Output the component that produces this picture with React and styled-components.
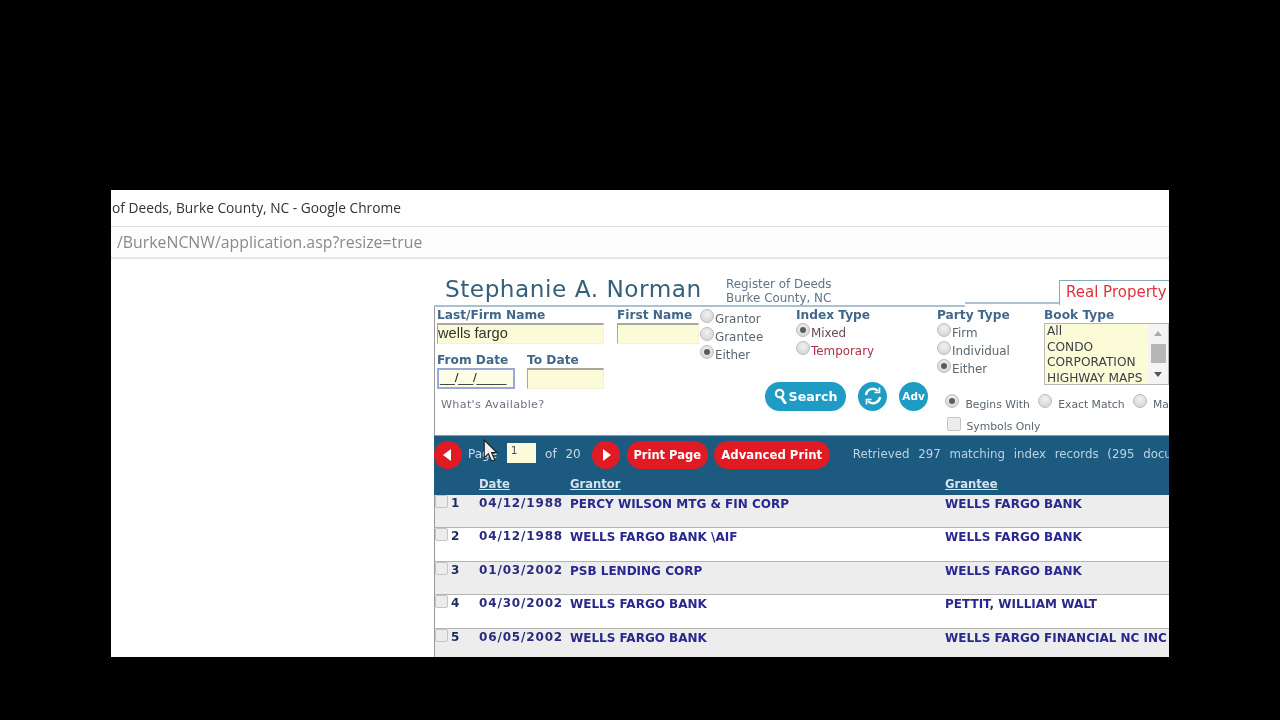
import React from 'react';
import styled, { createGlobalStyle } from 'styled-components';

const GlobalStyle = createGlobalStyle`
  html, body {
    margin: 0;
    background: #000;
  }
  * {
    box-sizing: border-box;
  }
`;

const Page = styled.div`
  width: 1280px;
  height: 720px;
  padding: 190px 111px 63px;
  background: #000;
  overflow: hidden;
`;

const Win = styled.div`
  position: relative;
  width: 1058px;
  height: 467px;
  background: #fff;
  overflow: hidden;
  filter: blur(0.55px);
  font-family: 'DejaVu Sans', sans-serif;
`;

const TitleBar = styled.div`
  height: 37px;
  padding: 0 1px 2px;
  display: flex;
  align-items: center;
  font-family: 'Open Sans', sans-serif;
  font-size: 13.75px;
  font-weight: 500;
  color: #333;
  background: #fff;
  border-bottom: 1px solid #dcdcdc;
`;

const AddressBar = styled.div`
  height: 32px;
  padding: 0 6px;
  display: flex;
  align-items: center;
  font-family: 'Open Sans', sans-serif;
  font-size: 15.85px;
  color: #8a8a8a;
  background: #fdfdfd;
  border-bottom: 2px solid #e6e6e6;
`;

const Body = styled.div`
  display: flex;
  padding-left: 323px;
`;

const Main = styled.div`
  width: 735px;
  flex: none;
`;

const Head = styled.div`
  height: 46px;
  display: flex;
  align-items: flex-end;
  padding-left: 11px;
`;

const Name = styled.div`
  width: 281px;
  flex: none;
  font-size: 23.2px;
  line-height: 30px;
  letter-spacing: 0.52px;
  color: #35607c;
  padding-bottom: 1px;
`;

const Office = styled.div`
  font-size: 11.9px;
  line-height: 14px;
  color: #5d7486;
  white-space: nowrap;
`;

const Tab = styled.div`
  margin-left: auto;
  width: 110px;
  height: 25px;
  padding: 2px 0 0 6px;
  font-size: 15px;
  color: #e0323c;
  white-space: nowrap;
  border: 1px solid #86a8bd;
  border-width: 1px 0 0 1px;
  background: #fff;
`;

const Rule = styled.div`
  display: flex;
  height: 2px;
`;

const RuleSeg = styled.div`
  width: ${(p) => p.$w}px;
  height: 2px;
  background: #a9c1d2;
  ${(p) => p.$raised && 'transform: translateY(-3px);'}
`;

const Form = styled.div`
  height: 128px;
  display: flex;
  border-left: 1px solid #9a9a9a;
`;

const NameCol = styled.div`
  width: 265px;
  flex: none;
  padding: 1px 0 0 2px;
  display: flex;
  flex-direction: column;
`;

const FieldRow = styled.div`
  display: flex;
  gap: ${(p) => p.$gap}px;
  margin-bottom: 9px;
`;

const Field = styled.div`
  width: ${(p) => p.$w}px;
  flex: none;
`;

const Label = styled.div`
  font-size: 12.2px;
  line-height: 14px;
  font-weight: 700;
  color: #42678a;
  white-space: nowrap;
  margin-bottom: ${(p) => p.$mb || 0}px;
`;

const Input = styled.div`
  width: 100%;
  height: 21px;
  margin-top: 1px;
  background: #fbfbd8;
  border: 1px solid #f0f0dc;
  border-top: 2px solid #a8a8a0;
  border-left: 1px solid #a8a8a0;
  font-family: 'Liberation Sans', sans-serif;
  font-size: 14.6px;
  line-height: 17px;
  color: #333;
  white-space: nowrap;
  ${(p) => p.$focus && 'border: 2px solid #98a8d8; background: #fdfde6; color: #222; font-size: 13.6px; line-height: 15px; letter-spacing: -0.2px; padding-left: 1px;'}
`;

const Available = styled.div`
  font-size: 11.2px;
  line-height: 14px;
  margin: 0 0 0 4px;
  color: #6b7480;
  letter-spacing: 0.3px;
`;

const RightCol = styled.div`
  flex: 1;
  min-width: 0;
`;

const TopRow = styled.div`
  height: 74px;
  display: flex;
`;

const Group = styled.div`
  width: ${(p) => p.$w}px;
  flex: none;
  padding-top: ${(p) => p.$top}px;
`;

const Radio = styled.span`
  display: inline-block;
  flex: none;
  position: relative;
  width: 14px;
  height: 14px;
  border-radius: 50%;
  background: radial-gradient(circle at 50% 35%, #f2f2f2, #cfcfcf);
  border: 1px solid #bcbcbc;
  ${(p) => p.$on && `
    &::after {
      content: '';
      position: absolute;
      left: 3px;
      top: 3px;
      width: 6px;
      height: 6px;
      border-radius: 50%;
      background: #5c5c5c;
    }
  `}
`;

const Opt = styled.div`
  height: 18px;
  display: flex;
  align-items: flex-start;
  gap: ${(p) => p.$gap || 1}px;
  margin-left: ${(p) => p.$ml || 0}px;
  font-size: ${(p) => p.$size || 11.9}px;
  line-height: 14px;
  color: ${(p) => p.$color || '#5a6670'};
  white-space: nowrap;
`;

const OptText = styled.span`
  margin-top: ${(p) => p.$top || 3}px;
`;

const BookList = styled.div`
  width: 125px;
  height: 62px;
  display: flex;
  background: #fbfbd8;
  border: 1px solid #b8b8b0;
  overflow: hidden;
`;

const BookItems = styled.div`
  flex: 1;
  padding: 0 0 0 2px;
  font-size: 12.2px;
  line-height: 15.6px;
  color: #3a3f4a;
  white-space: nowrap;
  min-width: 0;
`;

const Scroll = styled.div`
  width: 20px;
  flex: none;
  background: #f4f4f4;
  display: flex;
  flex-direction: column;
  align-items: center;
  padding-top: 7px;
`;

const Thumb = styled.div`
  width: 15px;
  height: 19px;
  margin: 8px 0 9px;
  background: #b6b6b6;
`;

const Arrow = styled.div`
  width: 0;
  height: 0;
  border-left: 4px solid transparent;
  border-right: 4px solid transparent;
  border-bottom: ${(p) => (p.$down ? '0' : '5px solid #aaa')};
  border-top: ${(p) => (p.$down ? '5px solid #555' : '0')};
`;

const ActionRow = styled.div`
  display: flex;
  padding-left: 65px;
`;

const Actions = styled.div`
  display: flex;
  align-items: center;
  gap: 12px;
  height: 30px;
  width: 180px;
  flex: none;
`;

const SearchBtn = styled.div`
  width: 81px;
  height: 29px;
  border-radius: 15px;
  background: #1f9cc4;
  color: #fff;
  display: flex;
  align-items: center;
  justify-content: center;
  gap: 1px;
  font-size: 12.6px;
  font-weight: 700;
`;

const RoundBtn = styled.div`
  width: 29px;
  height: 29px;
  border-radius: 50%;
  flex: none;
  background: #1f9cc4;
  color: #fff;
  display: flex;
  align-items: center;
  justify-content: center;
  font-size: 10.5px;
  font-weight: 700;
`;

const Matches = styled.div`
  flex: 1;
  padding-top: 13px;
  min-width: 0;
`;

const MatchRow = styled.div`
  display: flex;
  gap: 8px;
  height: 23px;
  white-space: nowrap;
`;

const Check = styled.span`
  display: inline-block;
  flex: none;
  width: ${(p) => p.$size}px;
  height: ${(p) => p.$size}px;
  background: #ececec;
  border: 1px solid #c4c4c4;
  border-radius: 2px;
`;

const Bar = styled.div`
  height: 60px;
  background: #1c5a80;
  border-top: 1px solid #7e9db3;
  color: #c9dbe8;
`;

const Pager = styled.div`
  height: 38px;
  display: flex;
  align-items: center;
  white-space: nowrap;
  font-size: 12px;
`;

const RedCircle = styled.div`
  width: 28px;
  height: 28px;
  flex: none;
  margin-left: ${(p) => p.$ml || 0}px;
  border-radius: 50%;
  background: #e01b24;
  display: flex;
  align-items: center;
  justify-content: center;
`;

const Tri = styled.div`
  width: 0;
  height: 0;
  border-top: 6px solid transparent;
  border-bottom: 6px solid transparent;
  ${(p) => (p.$left ? 'border-right: 8px solid #fff; margin-right: 2px;' : 'border-left: 8px solid #fff; margin-left: 2px;')}
`;

const PagerText = styled.span`
  margin-left: ${(p) => p.$ml}px;
  margin-top: -3px;
  word-spacing: 5px;
`;

const PageInput = styled.div`
  width: 29px;
  height: 20px;
  flex: none;
  margin: -4px 0 0 10px;
  padding-left: 4px;
  background: #fbfbdc;
  font-size: 10px;
  line-height: 16px;
  color: #445;
`;

const RedBtn = styled.div`
  height: 28px;
  flex: none;
  width: ${(p) => p.$w}px;
  margin-left: ${(p) => p.$ml}px;
  border-radius: 14px;
  background: #e01b24;
  color: #fff;
  display: flex;
  align-items: center;
  justify-content: center;
  font-size: ${(p) => p.$size}px;
  font-weight: 700;
`;

const Retrieved = styled.span`
  margin-left: 23px;
  margin-top: -2px;
  font-size: 11.8px;
  color: #bcd2e2;
  word-spacing: 5px;
`;

const ColHead = styled.div`
  display: grid;
  grid-template-columns: 45px 91px 375px 1fr;
  height: 21px;
  padding-top: 3px;
  font-size: 11.6px;
  font-weight: 700;
  color: #d5e3ee;
`;

const ColText = styled.span`
  text-decoration: underline;
`;

const TableRow = styled.div`
  display: grid;
  grid-template-columns: 13px 31px 91px 375px 1fr;
  height: 33.4px;
  align-items: flex-start;
  white-space: nowrap;
  background: ${(p) => (p.$alt ? '#ededed' : '#fff')};
  border-bottom: 1px solid #b4b4b4;
  border-left: 1px solid #9a9a9a;
  font-size: 12px;
  line-height: 14px;
  font-weight: 700;
  color: #28288e;
`;

const RowCell = styled.span`
  padding-top: 2px;
  ${(p) => p.$num && 'color: #1c2a5c; padding-left: 3px; padding-top: 1px;'}
  ${(p) => p.$date && 'letter-spacing: 0.85px; padding-top: 1px; color: #2a2a80;'}
`;

const Cursor = styled.svg`
  position: absolute;
  left: 372px;
  top: 249px;
`;

const rows = [
  ['1', '04/12/1988', 'PERCY WILSON MTG & FIN CORP', 'WELLS FARGO BANK'],
  ['2', '04/12/1988', 'WELLS FARGO BANK \\AIF', 'WELLS FARGO BANK'],
  ['3', '01/03/2002', 'PSB LENDING CORP', 'WELLS FARGO BANK'],
  ['4', '04/30/2002', 'WELLS FARGO BANK', 'PETTIT, WILLIAM WALT'],
  ['5', '06/05/2002', 'WELLS FARGO BANK', 'WELLS FARGO FINANCIAL NC INC'],
];

const App = () => (
  <Page>
    <GlobalStyle />
    <Win>
      <TitleBar>of Deeds, Burke County, NC - Google Chrome</TitleBar>
      <AddressBar>/BurkeNCNW/application.asp?resize=true</AddressBar>
      <Body>
        <Main>
          <Head>
            <Name>Stephanie A. Norman</Name>
            <Office>
              Register of Deeds
              <br />
              Burke County, NC
            </Office>
            <Tab>Real Property</Tab>
          </Head>
          <Rule>
            <RuleSeg $w={531} />
            <RuleSeg $w={94} $raised />
          </Rule>
          <Form>
            <NameCol>
              <FieldRow $gap={13}>
                <Field $w={167}>
                  <Label>Last/Firm Name</Label>
                  <Input>wells fargo</Input>
                </Field>
                <Field $w={82}>
                  <Label>First Name</Label>
                  <Input />
                </Field>
              </FieldRow>
              <FieldRow $gap={12}>
                <Field $w={78}>
                  <Label>From Date</Label>
                  <Input $focus>__/__/____</Input>
                </Field>
                <Field $w={77}>
                  <Label>To Date</Label>
                  <Input />
                </Field>
              </FieldRow>
              <Available>What's Available?</Available>
            </NameCol>
            <RightCol>
              <TopRow>
                <Group $w={96} $top={2}>
                  <Opt><Radio /><OptText>Grantor</OptText></Opt>
                  <Opt><Radio /><OptText>Grantee</OptText></Opt>
                  <Opt><Radio $on /><OptText>Either</OptText></Opt>
                </Group>
                <Group $w={141} $top={1}>
                  <Label $mb={1}>Index Type</Label>
                  <Opt $color="#6a4a58"><Radio $on /><OptText>Mixed</OptText></Opt>
                  <Opt $color="#b03048"><Radio /><OptText>Temporary</OptText></Opt>
                </Group>
                <Group $w={107} $top={1}>
                  <Label $mb={1}>Party Type</Label>
                  <Opt><Radio /><OptText>Firm</OptText></Opt>
                  <Opt><Radio /><OptText>Individual</OptText></Opt>
                  <Opt><Radio $on /><OptText>Either</OptText></Opt>
                </Group>
                <Group $w={125} $top={1}>
                  <Label $mb={1}>Book Type</Label>
                  <BookList>
                    <BookItems>
                      All<br />CONDO<br />CORPORATION<br />HIGHWAY MAPS
                    </BookItems>
                    <Scroll>
                      <Arrow />
                      <Thumb />
                      <Arrow $down />
                    </Scroll>
                  </BookList>
                </Group>
              </TopRow>
              <ActionRow>
                <Actions>
                  <SearchBtn>
                    <svg width="14" height="16" viewBox="0 0 15 17">
                      <circle cx="6" cy="6" r="4" fill="none" stroke="#fff" strokeWidth="2.4" />
                      <path d="M8 10l4 6" stroke="#fff" strokeWidth="3" strokeLinecap="round" />
                    </svg>
                    Search
                  </SearchBtn>
                  <RoundBtn>
                    <svg width="20" height="20" viewBox="0 0 20 20" fill="none" stroke="#fff" strokeWidth="2.4">
                      <path d="M3 9a7 7 0 0 1 12-4" />
                      <path d="M17 11a7 7 0 0 1-12 4" />
                      <path d="M16.5 1.5v5h-5M3.5 18.5v-5h5" strokeWidth="1.6" />
                    </svg>
                  </RoundBtn>
                  <RoundBtn>Adv</RoundBtn>
                </Actions>
                <Matches>
                  <MatchRow>
                    <Opt $size={10.8} $gap={3}><Radio $on /><OptText $top={4}>&nbsp;Begins With</OptText></Opt>
                    <Opt $size={10.8} $gap={3}><Radio /><OptText $top={4}>&nbsp;Exact Match</OptText></Opt>
                    <Opt $size={10.8} $gap={3}><Radio /><OptText $top={4}>&nbsp;Match</OptText></Opt>
                  </MatchRow>
                  <Opt $size={10.8} $gap={2} $ml={2}><Check $size={14} /><OptText>&nbsp;Symbols Only</OptText></Opt>
                </Matches>
              </ActionRow>
            </RightCol>
          </Form>
          <Bar>
            <Pager>
              <RedCircle><Tri $left /></RedCircle>
              <PagerText $ml={6}>Page</PagerText>
              <PageInput>1</PageInput>
              <PagerText $ml={9}>of 20</PagerText>
              <RedCircle $ml={11}><Tri /></RedCircle>
              <RedBtn $w={81} $ml={7} $size={11.5}>Print Page</RedBtn>
              <RedBtn $w={116} $ml={6} $size={11.7}>Advanced Print</RedBtn>
              <Retrieved>Retrieved 297 matching index records (295 documents)</Retrieved>
            </Pager>
            <ColHead>
              <span />
              <ColText>Date</ColText>
              <ColText>Grantor</ColText>
              <ColText>Grantee</ColText>
            </ColHead>
          </Bar>
          {rows.map(([num, date, grantor, grantee], i) => (
            <TableRow key={num} $alt={i % 2 === 0}>
              <Check $size={13} />
              <RowCell $num>{num}</RowCell>
              <RowCell $date>{date}</RowCell>
              <RowCell>{grantor}</RowCell>
              <RowCell>{grantee}</RowCell>
            </TableRow>
          ))}
        </Main>
      </Body>
      <Cursor width="15" height="23" viewBox="0 0 14 22">
        <path d="M1 1v17l4-4 3 7 3-1-3-7h5z" fill="#f0f0f0" stroke="#1a1a1a" strokeWidth="1" />
      </Cursor>
    </Win>
  </Page>
);

export default App;
